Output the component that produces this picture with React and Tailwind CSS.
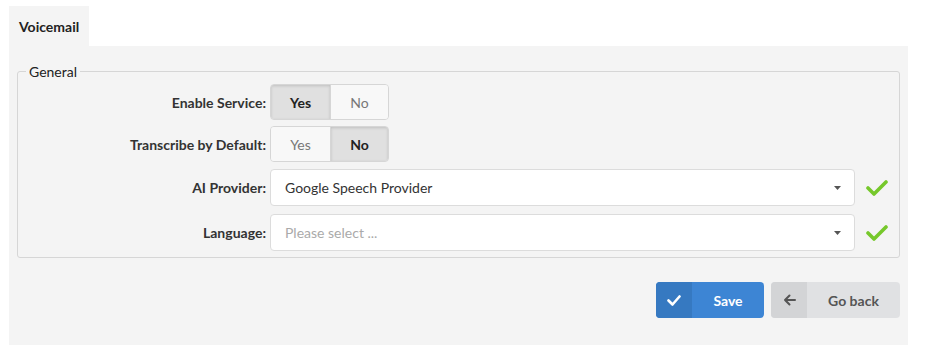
import { useState } from 'react'

function Toggle({ value, onChange }) {
  const seg = (label, active) => (
    <button
      onClick={() => onChange(label)}
      className={
        'h-full flex items-center justify-center text-[14px] ' +
        (active
          ? 'bg-[#e0e0e0] text-[#222] font-bold shadow-[inset_0_1px_3px_rgba(0,0,0,0.15)]'
          : 'bg-[#f8f8f8] text-[#777]')
      }
      style={{ width: label === 'Yes' ? 60 : 57 }}>
      {label}
    </button>
  )
  return (
    <div className="flex h-[36px] border border-[#d6d6d6] rounded-[4px] overflow-hidden divide-x divide-[#d6d6d6]">
      {seg('Yes', value === 'Yes')}
      {seg('No', value === 'No')}
    </div>
  )
}

function Check() {
  return (
    <svg width="22" height="16" viewBox="0 0 22 16">
      <polyline points="2,8 8,14 20,2" fill="none" stroke="#76c82b" strokeWidth="3.6" strokeLinecap="round" strokeLinejoin="round" />
    </svg>
  )
}

function Select({ value, placeholder }) {
  return (
    <div className="flex-1 h-[37px] bg-white border border-[#dcdcdc] rounded-[4px] flex items-center pl-[14px] pr-[13px]">
      <span className={'flex-1 text-[14px] ' + (value ? 'text-[#333]' : 'text-[#aaa]')}>
        {value || placeholder}
      </span>
      <svg width="7" height="4" viewBox="0 0 7 4"><polygon points="0,0 7,0 3.5,4" fill="#555" /></svg>
    </div>
  )
}

export default function App() {
  const [enable, setEnable] = useState('Yes')
  const [transcribe, setTranscribe] = useState('No')

  return (
    <div className="pt-[6px] pl-[9px] pr-[18px] bg-white min-h-[346px]" style={{ fontFamily: 'Lato, "Open Sans", sans-serif' }}>

      {/* Tabs */}
      <div className="flex">
        <div className="bg-[#f4f4f4] h-[40px] px-[10px] flex items-center text-[14px] font-bold text-[#222]">
          Voicemail
        </div>
      </div>

      {/* Panel */}
      <div className="bg-[#f4f4f4] pt-[17px] px-[8px] pb-[27px]">
        <fieldset className="border border-[#d6d6d6] rounded-[3px] pl-[8px] pt-[4px] pb-[6px]">
          <legend className="px-[3px] text-[14px] leading-[17px] text-[#222]">General</legend>

          <div className="flex flex-col">
            <div className="flex items-center">
              <div className="w-[244px] text-right text-[14px] font-bold text-[#333] pr-[4px]">Enable Service:</div>
              <Toggle value={enable} onChange={setEnable} />
            </div>
            <div className="flex items-center mt-[6px]">
              <div className="w-[244px] text-right text-[14px] font-bold text-[#333] pr-[4px]">Transcribe by Default:</div>
              <Toggle value={transcribe} onChange={setTranscribe} />
            </div>
            <div className="flex items-center mt-[7px]">
              <div className="w-[244px] text-right text-[14px] font-bold text-[#333] pr-[4px]">AI Provider:</div>
              <Select value="Google Speech Provider" />
              <div className="w-[44px] flex justify-center"><Check /></div>
            </div>
            <div className="flex items-center mt-[8px]">
              <div className="w-[244px] text-right text-[14px] font-bold text-[#333] pr-[4px]">Language:</div>
              <Select placeholder="Please select ..." />
              <div className="w-[44px] flex justify-center"><Check /></div>
            </div>
          </div>
        </fieldset>

        {/* Actions */}
        <div className="flex justify-end gap-[7px] mt-[24px]">
          <button className="flex h-[36px] w-[108px] rounded-[4px] overflow-hidden bg-[#3d85d4] text-white">
            <span className="w-[36px] h-full flex items-center justify-center bg-[#3679c1]">
              <svg width="14" height="11" viewBox="0 0 14 11">
                <polyline points="1.5,5.5 5.5,9.5 12.5,1.5" fill="none" stroke="white" strokeWidth="2.6" strokeLinecap="round" strokeLinejoin="round" />
              </svg>
            </span>
            <span className="flex-1 flex items-center justify-center text-[14px] font-bold">Save</span>
          </button>
          <button className="flex h-[36px] w-[129px] rounded-[4px] overflow-hidden bg-[#e0e1e3] text-[#555]">
            <span className="w-[36px] h-full flex items-center justify-center bg-[#d3d4d6]">
              <svg width="13" height="12" viewBox="0 0 13 12">
                <path d="M12 6H2M6.5 1.5L2 6l4.5 4.5" fill="none" stroke="#555" strokeWidth="2" strokeLinecap="round" strokeLinejoin="round" />
              </svg>
            </span>
            <span className="flex-1 flex items-center justify-center text-[14px] font-bold">Go back</span>
          </button>
        </div>
      </div>
    </div>
  )
}
